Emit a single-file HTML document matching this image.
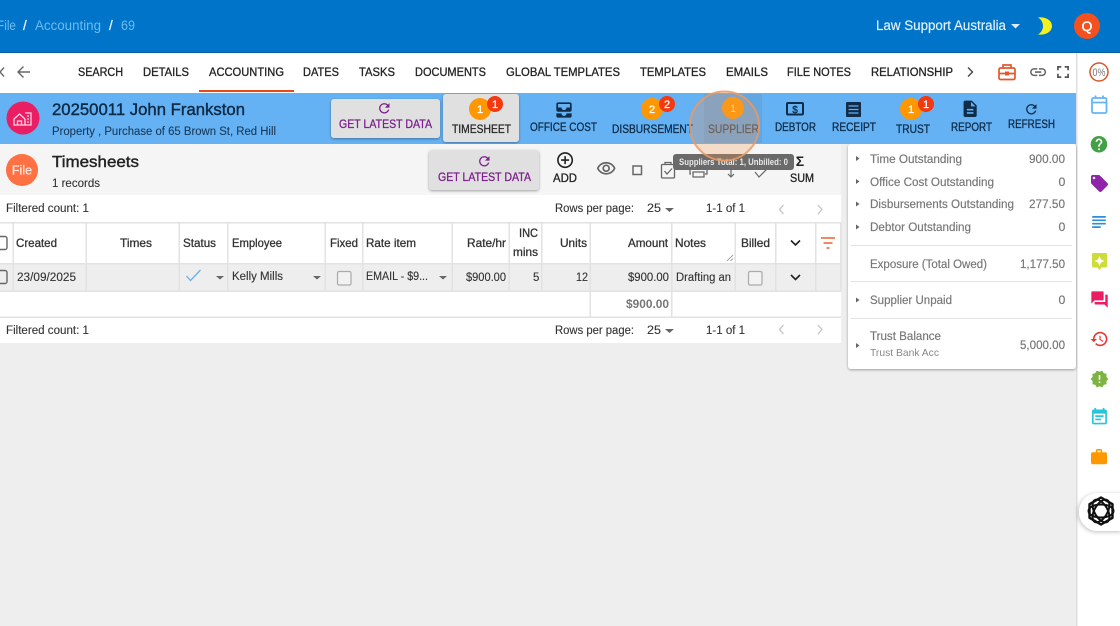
<!DOCTYPE html>
<html lang="en"><head><meta charset="utf-8"><title>Timesheets</title>
<style>
html,body{margin:0;padding:0;width:1120px;height:626px;overflow:hidden;background:#eee}
svg{display:block;filter:blur(.3px)}
text{font-family:"Liberation Sans",Arial,sans-serif;font-size:12px;fill:#333}
.n{fill:#222;stroke:#222;stroke-width:.3;font-size:12.3px}
.b{fill:#0f2c48;stroke:#0f2c48;stroke-width:.3;font-size:12px}
.p{fill:#7b1f8c;stroke:#7b1f8c;stroke-width:.3;font-size:12px}
.h{fill:#333;stroke:#333;stroke-width:.3;font-size:12px}
.c{fill:#333;font-size:11.5px;stroke:#333;stroke-width:.12}
.g{fill:#777;font-size:12.3px;stroke:#777;stroke-width:.18}
.w{fill:#fff;stroke:#fff;stroke-width:.3;font-size:11px;text-anchor:middle}
</style></head><body>
<svg width="1120" height="626" viewBox="0 0 1120 626" xmlns="http://www.w3.org/2000/svg">
<defs>
<filter id="s" x="-10%" y="-10%" width="120%" height="130%"><feDropShadow dx="0" dy="1" stdDeviation="1.2" flood-color="#000" flood-opacity=".35"/></filter>
<filter id="s2" x="-20%" y="-20%" width="140%" height="140%"><feDropShadow dx="-1" dy="1" stdDeviation="2" flood-color="#000" flood-opacity=".25"/></filter>
</defs>
<rect width="1120" height="626" fill="#eee"/>
<!-- header -->
<rect width="1120" height="53" fill="#0074c8"/><rect y="52" width="1120" height="1" fill="#0a5f9e"/>
<text x="-3" y="30" textLength="19" lengthAdjust="spacingAndGlyphs" style="font-size:13.500px;fill:#6cbcf2">File</text>
<text x="23" y="30" style="font-size:13.500px;fill:#e6f2fb;stroke:#e6f2fb;stroke-width:.3">/</text>
<text x="35" y="30" textLength="66" lengthAdjust="spacingAndGlyphs" style="font-size:13.500px;fill:#6cbcf2">Accounting</text>
<text x="109" y="30" style="font-size:13.500px;fill:#e6f2fb;stroke:#e6f2fb;stroke-width:.3">/</text>
<text x="121" y="30" textLength="14" lengthAdjust="spacingAndGlyphs" style="font-size:13.500px;fill:#6cbcf2">69</text>
<text x="876" y="30" textLength="130" lengthAdjust="spacingAndGlyphs" style="font-size:13.500px;fill:#e4f1fb;stroke:#e4f1fb;stroke-width:.15">Law Support Australia</text>
<path d="M1011 24h9l-4.500 4.500z" fill="#dcedfa"/>
<path d="M1038 17.500c8-1 14 3 14 8.500s-6 9.500-14 8.500c3.500-2 5-5.500 5-8.500s-1.500-6.500-5-8.500z" fill="#f4f01e"/>
<circle cx="1087" cy="26" r="13" fill="#f4511e"/>
<text x="1087" y="31" style="font-size:14px;fill:#fff;text-anchor:middle;stroke:#fff;stroke-width:.4">Q</text>
<!-- nav -->
<rect y="53" width="1076" height="40" fill="#fff"/>
<rect x="1076" y="53" width="44" height="573" fill="#fff"/><rect x="1076" y="53" width="1.500" height="573" fill="#dedede"/>
<path d="M4 67.500L0 72l4 4.500" fill="none" stroke="#666" stroke-width="1.400"/>
<path d="M30 72H18m5.500-5.500L18 72l5.500 5.500" fill="none" stroke="#666" stroke-width="1.400"/>
<text class="n" x="78" y="76" textLength="45" lengthAdjust="spacingAndGlyphs">SEARCH</text>
<text class="n" x="143" y="76" textLength="46" lengthAdjust="spacingAndGlyphs">DETAILS</text>
<text class="n" x="209" y="76" textLength="75" lengthAdjust="spacingAndGlyphs">ACCOUNTING</text>
<text class="n" x="303" y="76" textLength="36" lengthAdjust="spacingAndGlyphs">DATES</text>
<text class="n" x="359" y="76" textLength="36" lengthAdjust="spacingAndGlyphs">TASKS</text>
<text class="n" x="415" y="76" textLength="71" lengthAdjust="spacingAndGlyphs">DOCUMENTS</text>
<text class="n" x="506" y="76" textLength="114" lengthAdjust="spacingAndGlyphs">GLOBAL TEMPLATES</text>
<text class="n" x="640" y="76" textLength="66" lengthAdjust="spacingAndGlyphs">TEMPLATES</text>
<text class="n" x="726" y="76" textLength="42" lengthAdjust="spacingAndGlyphs">EMAILS</text>
<text class="n" x="787" y="76" textLength="64" lengthAdjust="spacingAndGlyphs">FILE NOTES</text>
<text class="n" x="871" y="76" textLength="82" lengthAdjust="spacingAndGlyphs">RELATIONSHIP</text>
<path d="M968 67.500l4.500 4.500-4.500 4.500" fill="none" stroke="#444" stroke-width="1.400"/>
<rect x="199" y="90" width="95" height="2" fill="#e64a19"/>
<g fill="none" stroke="#e4572e" stroke-width="1.700"><rect x="999" y="68" width="16" height="11.500" rx="1.500"/><path d="M1003 68v-3h8v3M999 73.500h16"/></g><rect x="1005" y="71.500" width="4" height="4" fill="#e4572e"/>
<path transform="translate(1028.500 62.500) scale(.8)" fill="#666" d="M3.900 12c0-1.710 1.390-3.100 3.100-3.100h4V7H7c-2.760 0-5 2.240-5 5s2.240 5 5 5h4v-1.900H7c-1.710 0-3.100-1.390-3.100-3.100zM8 13h8v-2H8v2zm9-6h-4v1.900h4c1.710 0 3.100 1.390 3.100 3.100s-1.390 3.100-3.100 3.100h-4V17h4c2.760 0 5-2.240 5-5s-2.240-5-5-5z"/>
<path transform="translate(1052.800 61.800) scale(.85)" fill="#555" d="M7 14H5v5h5v-2H7v-3zm-2-4h2V7h3V5H5v5zm12 7h-3v2h5v-5h-2v3zM14 5v2h3v3h2V5h-5z"/>
<!-- blue band -->
<rect y="93" width="1076" height="51" fill="#64b1f4"/>
<circle cx="23" cy="118" r="16.500" fill="#e91e63"/>
<g fill="none" stroke="#fbd3e2" stroke-width="1.300"><path d="M14 119l5.500-5 5.500 5v6h-11z"/><path d="M17.500 125v-4h4v4M25 113h6v12h-6M27 116h2M27 119h2M27 122h2"/></g>
<text x="52" y="115" textLength="193" lengthAdjust="spacingAndGlyphs" style="font-size:17px;fill:#0d2a45;stroke:#0d2a45;stroke-width:.4">20250011 John Frankston</text>
<text x="52" y="135" textLength="224" lengthAdjust="spacingAndGlyphs" style="font-size:12.300px;fill:#1a3956;stroke:#1a3956;stroke-width:.1">Property , Purchase of 65 Brown St, Red Hill</text>
<!-- get latest 1 -->
<rect x="331" y="99" width="109" height="39" rx="3" fill="#e0e0e0" filter="url(#s)"/>
<path transform="translate(376.500 100.500) scale(.65)" fill="#7b1f8c" d="M17.650 6.350C16.200 4.900 14.210 4 12 4c-4.420 0-7.990 3.580-7.990 8s3.570 8 7.990 8c3.730 0 6.840-2.550 7.730-6h-2.080c-.82 2.330-3.040 4-5.650 4-3.310 0-6-2.690-6-6s2.690-6 6-6c1.660 0 3.140.69 4.220 1.780L13 11h7V4l-2.350 2.350z"/>
<text class="p" x="339" y="128" textLength="93" lengthAdjust="spacingAndGlyphs">GET LATEST DATA</text>
<!-- timesheet -->
<rect x="443" y="94" width="76" height="48" rx="3" fill="#e0e0e0" filter="url(#s)"/>
<circle cx="480" cy="109" r="11" fill="#ff9800"/><text class="w" x="480" y="113">1</text>
<circle cx="495" cy="104" r="8" fill="#f4380f"/><text class="w" x="495" y="108">1</text>
<text class="h" x="452" y="133" textLength="59" lengthAdjust="spacingAndGlyphs" style="fill:#222">TIMESHEET</text>
<!-- office cost -->
<path transform="translate(553.800 99.800) scale(.85)" fill="#0f2c48" d="M19 3H5c-1.100 0-2 .9-2 2v7c0 1.100.9 2 2 2h14c1.100 0 2-.9 2-2V5c0-1.100-.9-2-2-2zm0 6h-4c0 1.620-1.380 3-3 3s-3-1.380-3-3H5V5h14v4zm-4 7h6v3c0 1.100-.9 2-2 2H5c-1.100 0-2-.9-2-2v-3h6c0 1.660 1.340 3 3 3s3-1.340 3-3z"/>
<text class="b" x="530" y="131" textLength="67" lengthAdjust="spacingAndGlyphs">OFFICE COST</text>
<!-- disbursement -->
<circle cx="652" cy="109" r="11" fill="#ff9800"/><text class="w" x="652" y="113">2</text>
<circle cx="667" cy="104" r="8" fill="#f4380f"/><text class="w" x="667" y="108">2</text>
<text class="b" x="612" y="133" textLength="81" lengthAdjust="spacingAndGlyphs">DISBURSEMENT</text>
<!-- supplier -->
<rect x="704" y="94" width="58" height="49" fill="#5e92bf" opacity=".35"/>
<circle cx="733" cy="108" r="11" fill="#ff9800"/><text class="w" x="733" y="112" style="fill:#ffe0b0;stroke:none">1</text>
<text x="708" y="133" textLength="51" lengthAdjust="spacingAndGlyphs" style="font-size:12px;fill:#3f4750;stroke:#3f4750;stroke-width:.2">SUPPLIER</text>
<!-- debtor -->
<g fill="none" stroke="#0f2c48" stroke-width="2"><rect x="787" y="103" width="16" height="11.500" rx="1"/></g>
<text x="795" y="113" style="font-size:10px;fill:#0f2c48;stroke:#0f2c48;stroke-width:.3;text-anchor:middle">$</text>
<text class="b" x="775" y="131" textLength="41" lengthAdjust="spacingAndGlyphs">DEBTOR</text>
<!-- receipt -->
<rect x="846" y="102" width="15" height="15" rx="1" fill="#0f2c48"/>
<path d="M848.500 106h10M848.500 109.500h10M848.500 113h10" stroke="#64b1f4" stroke-width="1.300"/>
<text class="b" x="832" y="131" textLength="44" lengthAdjust="spacingAndGlyphs">RECEIPT</text>
<!-- trust -->
<circle cx="911" cy="109" r="11" fill="#ff9800"/><text class="w" x="911" y="113">1</text>
<circle cx="926" cy="104" r="8" fill="#f4380f"/><text class="w" x="926" y="108">1</text>
<text class="b" x="896" y="133" textLength="34" lengthAdjust="spacingAndGlyphs">TRUST</text>
<!-- report -->
<path transform="translate(960.300 99) scale(.82)" fill="#0f2c48" d="M14 2H6c-1.100 0-1.990.9-1.990 2L4 20c0 1.100.89 2 2 2h12c1.100 0 2-.9 2-2V8l-6-6zm2 16H8v-2h8v2zm0-4H8v-2h8v2zm-3-5V3.500L18.500 9H13z"/>
<text class="b" x="951" y="131" textLength="41" lengthAdjust="spacingAndGlyphs">REPORT</text>
<!-- refresh -->
<path transform="translate(1023.500 101.500) scale(.65)" fill="#0f2c48" d="M17.650 6.350C16.200 4.900 14.210 4 12 4c-4.420 0-7.990 3.580-7.990 8s3.570 8 7.990 8c3.730 0 6.840-2.550 7.730-6h-2.080c-.82 2.330-3.040 4-5.650 4-3.310 0-6-2.690-6-6s2.690-6 6-6c1.660 0 3.140.69 4.220 1.780L13 11h7V4l-2.350 2.350z"/>
<text class="b" x="1008" y="128" textLength="47" lengthAdjust="spacingAndGlyphs">REFRESH</text>
<!-- subheader -->
<rect y="144" width="841" height="51" fill="#f5f5f5"/>
<circle cx="22" cy="170" r="16" fill="#ff7043"/>
<text x="22" y="174.500" style="font-size:12.500px;fill:#ffe8de;text-anchor:middle;stroke:#ffe8de;stroke-width:.25">File</text>
<text x="52" y="167" textLength="87" lengthAdjust="spacingAndGlyphs" style="font-size:16px;fill:#222;stroke:#222;stroke-width:.4">Timesheets</text>
<text x="52" y="187" textLength="48" lengthAdjust="spacingAndGlyphs" style="font-size:12px;fill:#333;stroke:#333;stroke-width:.1">1 records</text>
<rect x="429" y="150" width="110" height="40" rx="3" fill="#e0e0e0" filter="url(#s)"/>
<path transform="translate(476.500 153.500) scale(.65)" fill="#7b1f8c" d="M17.650 6.350C16.200 4.900 14.210 4 12 4c-4.420 0-7.990 3.580-7.990 8s3.570 8 7.990 8c3.730 0 6.840-2.550 7.730-6h-2.080c-.82 2.330-3.040 4-5.650 4-3.310 0-6-2.690-6-6s2.690-6 6-6c1.660 0 3.140.69 4.220 1.780L13 11h7V4l-2.350 2.350z"/>
<text class="p" x="438" y="181" textLength="93" lengthAdjust="spacingAndGlyphs">GET LATEST DATA</text>
<path transform="translate(555.500 150.500) scale(.8)" fill="#222" d="M13 7h-2v4H7v2h4v4h2v-4h4v-2h-4V7zm-1-5C6.480 2 2 6.480 2 12s4.480 10 10 10 10-4.480 10-10S17.520 2 12 2zm0 18c-4.410 0-8-3.590-8-8s3.590-8 8-8 8 3.590 8 8-3.590 8-8 8z"/>
<text class="n" x="553" y="182" textLength="24" lengthAdjust="spacingAndGlyphs">ADD</text>
<path transform="translate(596 158.500) scale(.85)" fill="#666" d="M12 6c3.790 0 7.170 2.130 8.820 5.500C19.170 14.870 15.790 17 12 17s-7.170-2.130-8.820-5.500C4.830 8.130 8.210 6 12 6m0-2C7 4 2.730 7.110 1 11.500 2.730 15.890 7 19 12 19s9.270-3.110 11-7.500C21.270 7.110 17 4 12 4zm0 5c1.380 0 2.500 1.120 2.500 2.500S13.380 14 12 14s-2.500-1.120-2.500-2.500S10.620 9 12 9m0-2c-2.480 0-4.500 2.020-4.500 4.500S9.520 16 12 16s4.500-2.020 4.500-4.500S14.480 7 12 7z"/>
<rect x="633" y="166" width="8.500" height="8.500" fill="none" stroke="#666" stroke-width="1.500"/>
<g fill="none" stroke="#666" stroke-width="1.300"><rect x="661.500" y="164.500" width="13" height="13.500" rx="1"/><path d="M665 164.500v-2h6v2M664.500 171l2.500 3 5-5.500"/>
<path d="M693 165v-3h11v3M691 174h-1v-6c0-1 1-2 2-2h13c1 0 2 1 2 2v6h-2M693 172h11v5h-11z"/>
<path d="M731 166v11M728 174l3 3 3-3" stroke-width="1.200"/>
<path d="M755 172l4 5 10-10" stroke-width="1.200"/></g>
<text x="800" y="166" style="font-size:14px;font-weight:bold;fill:#222;text-anchor:middle">Σ</text>
<text class="n" x="790" y="182" textLength="24" lengthAdjust="spacingAndGlyphs">SUM</text>
<!-- table -->
<rect y="195" width="841" height="148" fill="#fff"/>
<rect y="264" width="841" height="27" fill="#eee"/>
<g fill="#e2e2e2">
<rect y="222" width="841" height="1.500"/><rect y="263" width="841" height="1.500"/><rect y="290.500" width="841" height="1.500"/><rect y="316.500" width="841" height="1.500"/>
<rect x="12.500" y="222" width="1.500" height="69"/><rect x="85.500" y="222" width="1.500" height="69"/><rect x="178.500" y="222" width="1.500" height="69"/><rect x="227" y="222" width="1.500" height="69"/><rect x="324.500" y="222" width="1.500" height="69"/><rect x="362" y="222" width="1.500" height="69"/><rect x="451.500" y="222" width="1.500" height="69"/><rect x="508.500" y="222" width="1.500" height="69"/><rect x="541" y="222" width="1.500" height="69"/><rect x="589.500" y="222" width="1.500" height="95"/><rect x="671" y="222" width="1.500" height="95"/><rect x="734.500" y="222" width="1.500" height="69"/><rect x="775" y="222" width="1.500" height="69"/><rect x="815" y="222" width="1.500" height="69"/><rect x="840" y="222" width="1.500" height="69"/>
</g>
<g>
<text class="c" x="6" y="212" textLength="83" lengthAdjust="spacingAndGlyphs">Filtered count: 1</text>
<text class="c" x="555" y="212" textLength="79" lengthAdjust="spacingAndGlyphs">Rows per page:</text>
<text class="c" x="647" y="212" textLength="14" lengthAdjust="spacingAndGlyphs">25</text>
<path d="M665 208h9l-4.500 4z" fill="#666"/>
<text class="c" x="706" y="212" textLength="39" lengthAdjust="spacingAndGlyphs">1-1 of 1</text>
<path d="M783.500 205l-4 4.500 4 4.500M818 205l4 4.500-4 4.500" fill="none" stroke="#c4c4c4" stroke-width="1.300"/>
<text class="c" x="6" y="334" textLength="83" lengthAdjust="spacingAndGlyphs">Filtered count: 1</text>
<text class="c" x="555" y="334" textLength="79" lengthAdjust="spacingAndGlyphs">Rows per page:</text>
<text class="c" x="647" y="334" textLength="14" lengthAdjust="spacingAndGlyphs">25</text>
<path d="M665 329h9l-4.500 4z" fill="#666"/>
<text class="c" x="706" y="334" textLength="39" lengthAdjust="spacingAndGlyphs">1-1 of 1</text>
<path d="M783.500 325l-4 4.500 4 4.500M818 325l4 4.500-4 4.500" fill="none" stroke="#c4c4c4" stroke-width="1.300"/>
</g>
<!-- header row -->
<rect x="-5" y="236.500" width="12" height="13" rx="2" fill="#fff" stroke="#666" stroke-width="1.400"/>
<text class="h" x="16" y="247" textLength="41" lengthAdjust="spacingAndGlyphs">Created</text>
<text class="h" x="120" y="247" textLength="32" lengthAdjust="spacingAndGlyphs">Times</text>
<text class="h" x="183" y="247" textLength="33" lengthAdjust="spacingAndGlyphs">Status</text>
<text class="h" x="232" y="247" textLength="50" lengthAdjust="spacingAndGlyphs">Employee</text>
<text class="h" x="330" y="247" textLength="28" lengthAdjust="spacingAndGlyphs">Fixed</text>
<text class="h" x="366" y="247" textLength="50" lengthAdjust="spacingAndGlyphs">Rate item</text>
<text class="h" x="467" y="247" textLength="39" lengthAdjust="spacingAndGlyphs">Rate/hr</text>
<text class="h" x="519" y="237" textLength="19" lengthAdjust="spacingAndGlyphs">INC</text>
<text class="h" x="513" y="256" textLength="25" lengthAdjust="spacingAndGlyphs">mins</text>
<text class="h" x="560" y="247" textLength="27" lengthAdjust="spacingAndGlyphs">Units</text>
<text class="h" x="628" y="247" textLength="40" lengthAdjust="spacingAndGlyphs">Amount</text>
<text class="h" x="675" y="247" textLength="31" lengthAdjust="spacingAndGlyphs">Notes</text>
<text class="h" x="741" y="247" textLength="29" lengthAdjust="spacingAndGlyphs">Billed</text>
<path d="M791 240.500l4.500 4.500 4.500-4.500" fill="none" stroke="#222" stroke-width="1.600"/>
<path d="M821 238h14M823.500 243h9M826.500 248h3" stroke="#e8622f" stroke-width="1.500"/>
<path d="M727 261l6-6M730.500 261l2.500-2.500" stroke="#888" stroke-width=".8"/>
<!-- data row -->
<rect x="-5" y="270.500" width="12" height="13" rx="2" fill="#eee" stroke="#666" stroke-width="1.400"/>
<text class="c" x="17" y="281" textLength="59" lengthAdjust="spacingAndGlyphs">23/09/2025</text>
<path d="M186.500 276l4 4.500 10-10.500" fill="none" stroke="#6ab0e4" stroke-width="1.300"/>
<path d="M216 276h8l-4 3.500zM313 276h8l-4 3.500zM439 276h8l-4 3.500z" fill="#666"/>
<text class="c" x="232" y="280" textLength="51" lengthAdjust="spacingAndGlyphs">Kelly Mills</text>
<rect x="337.500" y="271.500" width="13.500" height="13.500" rx="1.500" fill="#f2f2f2" stroke="#aaa" stroke-width="1.200"/>
<text class="c" x="366" y="280" textLength="62" lengthAdjust="spacingAndGlyphs">EMAIL - $9...</text>
<text class="c" x="466" y="281" textLength="40" lengthAdjust="spacingAndGlyphs">$900.00</text>
<text class="c" x="533" y="281">5</text>
<text class="c" x="576" y="281" textLength="12" lengthAdjust="spacingAndGlyphs">12</text>
<text class="c" x="628" y="281" textLength="41" lengthAdjust="spacingAndGlyphs">$900.00</text>
<text class="c" x="676" y="281" textLength="55" lengthAdjust="spacingAndGlyphs">Drafting an</text>
<rect x="748.500" y="271.500" width="13.500" height="13.500" rx="1.500" fill="#f2f2f2" stroke="#aaa" stroke-width="1.200"/>
<path d="M791 275l4.500 4.500 4.500-4.500" fill="none" stroke="#222" stroke-width="1.600"/>
<text x="626" y="308" textLength="43" lengthAdjust="spacingAndGlyphs" style="font-size:12px;font-weight:bold;fill:#777">$900.00</text>
<!-- right panel -->
<rect x="848" y="144" width="228" height="225" rx="3" fill="#fff" filter="url(#s)"/>
<rect x="848" y="140" width="228" height="4" fill="#64b1f4"/>
<g fill="#666"><path d="M856 156l3.500 2.500-3.500 2.500zM856 179l3.500 2.500-3.500 2.500zM856 201.500l3.500 2.500-3.500 2.500zM856 224.500l3.500 2.500-3.500 2.500zM856 297.500l3.500 2.500-3.500 2.500zM856 343l3.500 2.500-3.500 2.500z"/></g>
<text class="g" x="870" y="163" textLength="92" lengthAdjust="spacingAndGlyphs">Time Outstanding</text>
<text class="g" x="1029" y="163" textLength="36" lengthAdjust="spacingAndGlyphs">900.00</text>
<text class="g" x="870" y="186" textLength="124" lengthAdjust="spacingAndGlyphs">Office Cost Outstanding</text>
<text class="g" x="1058.500" y="186">0</text>
<text class="g" x="870" y="208" textLength="144" lengthAdjust="spacingAndGlyphs">Disbursements Outstanding</text>
<text class="g" x="1029" y="208" textLength="36" lengthAdjust="spacingAndGlyphs">277.50</text>
<text class="g" x="870" y="231" textLength="101" lengthAdjust="spacingAndGlyphs">Debtor Outstanding</text>
<text class="g" x="1058.500" y="231">0</text>
<rect x="851" y="245" width="221" height="1" fill="#e2e2e2"/>
<text class="g" x="870" y="268" textLength="117" lengthAdjust="spacingAndGlyphs">Exposure (Total Owed)</text>
<text class="g" x="1020" y="268" textLength="45" lengthAdjust="spacingAndGlyphs">1,177.50</text>
<rect x="851" y="281" width="221" height="1" fill="#e2e2e2"/>
<text class="g" x="870" y="304" textLength="82" lengthAdjust="spacingAndGlyphs">Supplier Unpaid</text>
<text class="g" x="1058.500" y="304">0</text>
<rect x="851" y="318" width="221" height="1" fill="#e2e2e2"/>
<text class="g" x="870" y="340" textLength="71" lengthAdjust="spacingAndGlyphs">Trust Balance</text>
<text x="870" y="356" textLength="69" lengthAdjust="spacingAndGlyphs" style="font-size:10.500px;fill:#888">Trust Bank Acc</text>
<text class="g" x="1020" y="349" textLength="45" lengthAdjust="spacingAndGlyphs">5,000.00</text>
<!-- tooltip + ripple -->
<rect x="673" y="154" width="121" height="16" rx="3" fill="#6a6a6a"/>
<text x="679" y="165" textLength="109" lengthAdjust="spacingAndGlyphs" style="font-size:9.500px;font-weight:bold;fill:#e8e8e8">Suppliers Total: 1, Unbilled: 0</text>
<circle cx="724.500" cy="126" r="34.500" fill="#f59a55" fill-opacity=".28" stroke="#eb9a60" stroke-opacity=".85" stroke-width="2"/>
<!-- sidebar icons -->
<circle cx="1099" cy="72" r="9" fill="#fff" stroke="#d6582a" stroke-width="1.500"/>
<text x="1092.500" y="76" textLength="13" lengthAdjust="spacingAndGlyphs" style="font-size:11px;fill:#777">0%</text>
<g fill="none" stroke="#64b5f6" stroke-width="1.800"><rect x="1092" y="98" width="14.500" height="15" rx="1.500"/><path d="M1092 102.500h14.500M1095.500 95.500v3M1103 95.500v3"/></g>
<path transform="translate(1089 134.300) scale(.83)" fill="#43a047" d="M12 2C6.480 2 2 6.480 2 12s4.480 10 10 10 10-4.480 10-10S17.520 2 12 2zm1 17h-2v-2h2v2zm2.070-7.750l-.9.920C13.450 12.900 13 13.500 13 15h-2v-.5c0-1.100.45-2.100 1.170-2.830l1.240-1.260c.37-.36.59-.86.59-1.410 0-1.100-.9-2-2-2s-2 .9-2 2H8c0-2.210 1.790-4 4-4s4 1.790 4 4c0 .88-.36 1.680-.93 2.250z"/>
<path transform="translate(1089.300 173.300) scale(.85)" fill="#8e24aa" d="M21.410 11.580l-9-9C12.050 2.220 11.550 2 11 2H4c-1.100 0-2 .9-2 2v7c0 .55.22 1.050.59 1.420l9 9c.36.36.86.58 1.410.58.55 0 1.050-.22 1.410-.59l7-7c.37-.36.59-.86.59-1.410 0-.55-.23-1.060-.59-1.420zM5.500 7C4.670 7 4 6.330 4 5.500S4.670 4 5.500 4 7 4.670 7 5.500 6.330 7 5.500 7z"/>
<path transform="translate(1088.800 211.800) scale(.85)" fill="#2f8ed8" d="M14 17H4v2h10v-2zm6-8H4v2h16V9zM4 15h16v-2H4v2zM4 5v2h16V5H4z"/>
<path d="M1093.500 253h12c1 0 1.500.5 1.500 1.500v11.500c0 1-.5 1.500-1.500 1.500h-4l-2 2.500-2-2.500h-4c-1 0-1.500-.5-1.500-1.500v-11.500c0-1 .5-1.500 1.500-1.500z" fill="#cddc39"/>
<path d="M1099.500 256l1.500 3.500 3.500 1.500-3.500 1.500-1.500 3.500-1.500-3.500-3.500-1.500 3.500-1.500z" fill="#fff"/>
<path transform="translate(1089.700 289.700) scale(.82)" fill="#e91e63" d="M21 6h-2v9H6v2c0 .55.45 1 1 1h11l4 4V7c0-.55-.45-1-1-1zm-4 6V3c0-.55-.45-1-1-1H3c-.55 0-1 .45-1 1v14l4-4h10c.55 0 1-.45 1-1z"/>
<path transform="translate(1089.800 329.400) scale(.8)" fill="#e53935" d="M13 3c-4.970 0-9 4.030-9 9H1l3.890 3.890.07.14L9 12H6c0-3.870 3.130-7 7-7s7 3.130 7 7-3.130 7-7 7c-1.930 0-3.680-.79-4.940-2.060l-1.420 1.420C8.270 19.990 10.510 21 13 21c4.970 0 9-4.030 9-9s-4.030-9-9-9zm-1 5v5l4.280 2.540.72-1.210-3.500-2.080V8H12z"/>
<path transform="translate(1089.900 369.400) scale(.8)" fill="#7cb342" d="M23 12l-2.440-2.780.34-3.680-3.610-.82-1.890-3.180L12 3 8.600 1.540 6.710 4.720l-3.610.81.34 3.680L1 12l2.440 2.780-.34 3.690 3.610.82 1.890 3.180L12 21l3.400 1.460 1.890-3.180 3.610-.82-.34-3.680L23 12zm-10 5h-2v-2h2v2zm0-4h-2V7h2v6z"/>
<path transform="translate(1089.500 407) scale(.83)" fill="#26c6da" d="M17 10H7v2h10v-2zm2-7h-1V1h-2v2H8V1H6v2H5c-1.110 0-1.990.9-1.990 2L3 19c0 1.100.89 2 2 2h14c1.100 0 2-.9 2-2V5c0-1.100-.9-2-2-2zm0 16H5V8h14v11zm-5-5H7v2h7v-2z"/>
<path transform="translate(1089.400 447.400) scale(.8)" fill="#ff9800" d="M20 6h-4V4c0-1.110-.89-2-2-2h-4c-1.110 0-2 .89-2 2v2H4c-1.110 0-1.990.89-1.990 2L2 19c0 1.110.89 2 2 2h16c1.110 0 2-.89 2-2V8c0-1.110-.89-2-2-2zm-6 0h-4V4h4v2z"/>
<!-- AI bubble -->
<path d="M1098 493h24v38h-24c-10 0-19-8-19-19s9-19 19-19z" fill="#fff" filter="url(#s2)"/>
<g fill="none" stroke="#111" stroke-width="2" transform="translate(1101 511)">
<path d="M0-13.500L11.500-6.800V6.800L0 13.500-11.500 6.800V-6.800z" stroke-linejoin="round" stroke-width="2.400"/>
<ellipse rx="12.500" ry="6.500"/><ellipse rx="12.500" ry="6.500" transform="rotate(60)"/><ellipse rx="12.500" ry="6.500" transform="rotate(120)"/>
</g>
</svg>
</body></html>
